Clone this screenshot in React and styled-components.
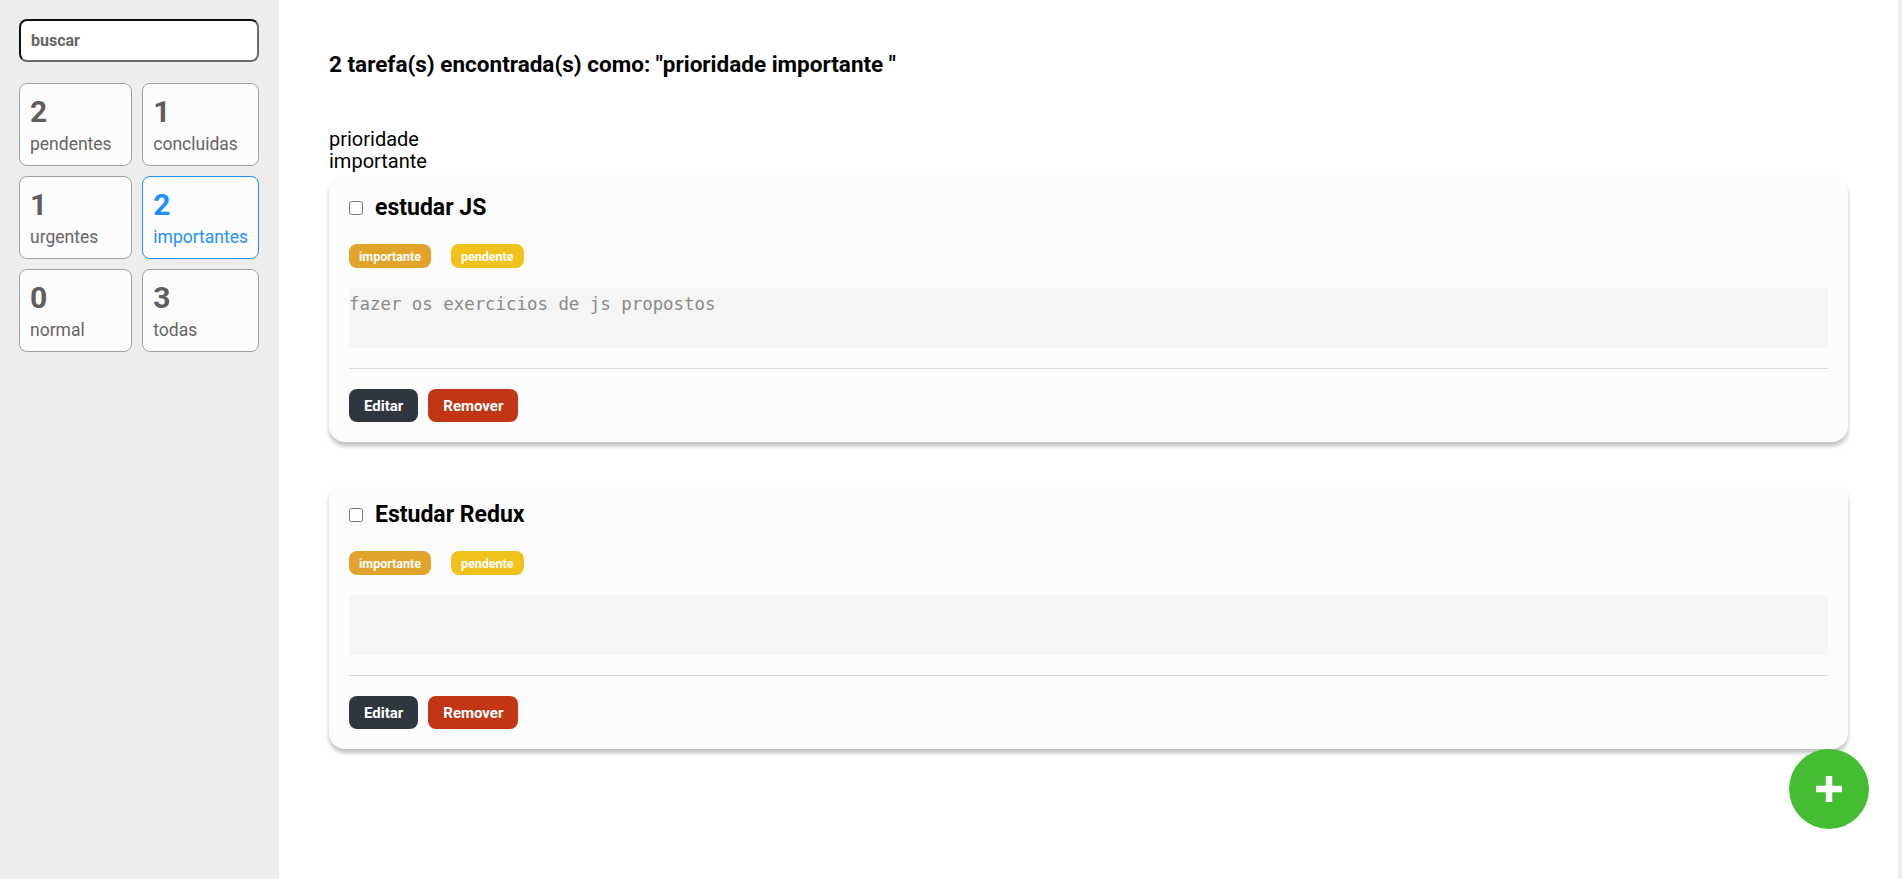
import React from "react";
import styled, { createGlobalStyle } from "styled-components";

const GlobalStyle = createGlobalStyle`
  * { box-sizing: border-box; }
  html, body { margin: 0; padding: 0; }
  body {
    font-family: Roboto, "Noto Sans", Arial, sans-serif;
    background: #ededed;
    color: #000;
  }
`;

const Layout = styled.div`
  display: grid;
  grid-template-columns: 279px 1fr;
  min-height: 100vh;
  padding-right: 4px;
  background: #ededed;
`;

const Sidebar = styled.aside`
  background: #ededed;
  padding: 19px 20px 19px 19px;
`;

const Search = styled.input`
  display: block;
  width: 100%;
  height: 43px;
  border-width: 2px;
  border-style: solid;
  border-color: #111 #6b6b6b #6b6b6b #111;
  border-radius: 8px;
  background: #fff;
  padding: 0 10px;
  font-family: Roboto, sans-serif;
  font-size: 16px;
  font-weight: 700;
  color: #666;
  outline: none;
  &::placeholder { color: #666; }
`;

const FilterGrid = styled.div`
  display: grid;
  grid-template-columns: 1fr 1fr;
  gap: 10px;
  margin-top: 21px;
`;

const FilterCard = styled.div`
  background: #fcfcfc;
  border: 1px solid ${(p) => (p.$active ? "#1e90ff" : "#a1a1a1")};
  border-radius: 8px;
  padding: 10px 10px 10px;
  color: ${(p) => (p.$active ? "#1e90ff" : "#5e5e5e")};
  cursor: pointer;
`;

const Count = styled.span`
  display: block;
  font-size: 30px;
  font-weight: 700;
  line-height: 36px;
`;

const Label = styled.span`
  display: block;
  margin-top: 3px;
  font-size: 17.5px;
  line-height: 22px;
  color: ${(p) => (p.$active ? "#1e90ff" : "#666")};
  white-space: nowrap;
`;

const Main = styled.main`
  background: #fff;
  padding: 51px 50px 40px;
`;

const Title = styled.h2`
  margin: 0;
  font-size: 22.5px;
  font-weight: 700;
  line-height: 26px;
`;

const FilterText = styled.p`
  margin: 51px 0 0;
  width: min-content;
  font-size: 20px;
  line-height: 22px;
`;

const TaskList = styled.ul`
  list-style: none;
  margin: 4px 0 0;
  padding: 0;
  display: flex;
  flex-direction: column;
  gap: 41px;
`;

const TaskCard = styled.li`
  background: #fcfcfc;
  border-radius: 16px;
  box-shadow: 0 4px 4px rgba(0, 0, 0, 0.25);
  padding: 18px 20px 20px;
`;

const TaskHeader = styled.label`
  display: flex;
  align-items: center;
  gap: 12px;
`;

const Check = styled.input`
  width: 14px;
  height: 14px;
  margin: 0;
`;

const TaskTitle = styled.h3`
  margin: 0;
  font-size: 23px;
  font-weight: 700;
  line-height: 28px;
`;

const Tags = styled.div`
  display: flex;
  gap: 20px;
  margin-top: 22px;
`;

const Tag = styled.span`
  display: inline-flex;
  align-items: center;
  height: 24px;
  padding: 0 10px;
  border-radius: 8px;
  background: ${(p) => p.$color};
  color: #fff;
  font-size: 12.5px;
  font-weight: 700;
`;

const Description = styled.div`
  margin-top: 20px;
  height: 60px;
  background: #f5f5f5;
  padding-top: 6px;
  font-family: "DejaVu Sans Mono", "Liberation Mono", monospace;
  font-size: 17.4px;
  color: #8a8a8a;
`;

const Actions = styled.div`
  margin-top: 20px;
  border-top: 1px solid #dcdcdc;
  padding-top: 20px;
  display: flex;
  gap: 10px;
`;

const Button = styled.button`
  height: 33px;
  padding: 0 15px;
  border: none;
  border-radius: 8px;
  background: ${(p) => p.$bg};
  color: #fff;
  font-family: Roboto, sans-serif;
  font-size: 15px;
  font-weight: 700;
  cursor: pointer;
`;

const Fab = styled.button`
  position: fixed;
  right: 33px;
  bottom: 50px;
  width: 80px;
  height: 80px;
  border-radius: 50%;
  border: none;
  background: #44bd32;
  display: flex;
  align-items: center;
  justify-content: center;
  cursor: pointer;
  padding: 0;
`;

const filters = [
  { count: 2, label: "pendentes" },
  { count: 1, label: "concluidas" },
  { count: 1, label: "urgentes" },
  { count: 2, label: "importantes", active: true },
  { count: 0, label: "normal" },
  { count: 3, label: "todas" },
];

const tasks = [
  { title: "estudar JS", desc: "fazer os exercicios de js propostos" },
  { title: "Estudar Redux", desc: "" },
];

export default function App() {
  return (
    <>
      <GlobalStyle />
      <Layout>
        <Sidebar>
          <Search type="text" placeholder="buscar" />
          <FilterGrid>
            {filters.map((f) => (
              <FilterCard key={f.label} $active={f.active}>
                <Count>{f.count}</Count>
                <Label $active={f.active}>{f.label}</Label>
              </FilterCard>
            ))}
          </FilterGrid>
        </Sidebar>
        <Main>
          <Title>2 tarefa(s) encontrada(s) como: "prioridade importante "</Title>
          <FilterText>prioridade importante</FilterText>
          <TaskList>
            {tasks.map((t) => (
              <TaskCard key={t.title}>
                <TaskHeader>
                  <Check type="checkbox" />
                  <TaskTitle>{t.title}</TaskTitle>
                </TaskHeader>
                <Tags>
                  <Tag $color="#e1a32a">importante</Tag>
                  <Tag $color="#f1c21b">pendente</Tag>
                </Tags>
                <Description>{t.desc}</Description>
                <Actions>
                  <Button $bg="#2f3640">Editar</Button>
                  <Button $bg="#c23616">Remover</Button>
                </Actions>
              </TaskCard>
            ))}
          </TaskList>
        </Main>
      </Layout>
      <Fab aria-label="adicionar">
        <svg width="26" height="26" viewBox="0 0 26 26">
          <rect x="9.75" y="0" width="6.5" height="26" fill="#fff" />
          <rect x="0" y="9.75" width="26" height="6.5" fill="#fff" />
        </svg>
      </Fab>
    </>
  );
}
